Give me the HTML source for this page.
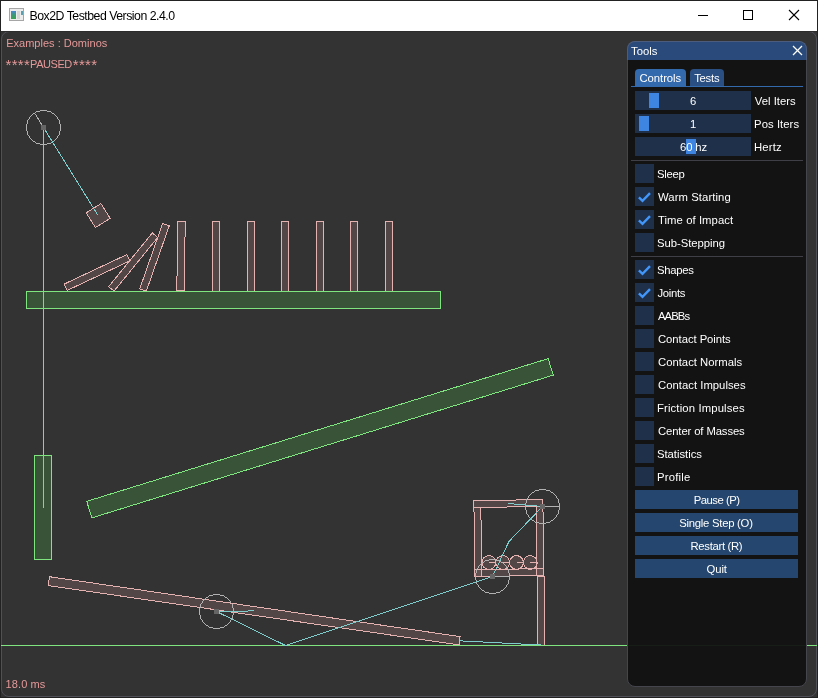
<!DOCTYPE html>
<html><head><meta charset="utf-8"><style>
*{margin:0;padding:0;box-sizing:border-box}
html,body{width:818px;height:698px;overflow:hidden;background:#202020;font-family:"Liberation Sans", sans-serif}
#win{position:absolute;left:0;top:0;width:818px;height:698px;background:#333333;will-change:transform;overflow:hidden}
#frame{position:absolute;left:0;top:0;width:818px;height:698px;border:1px solid #222222;pointer-events:none}
#title{position:absolute;left:1px;top:1px;width:816px;height:30px;background:#ffffff}
#row31{position:absolute;left:1px;top:31px;width:816px;height:1px;background:#2c2c2c}
#overlay{position:absolute;left:1px;top:31px;width:816px;height:666px;border:1px solid #505059;border-radius:8px}
.tx{position:absolute;line-height:13px;white-space:nowrap;font-family:"Liberation Sans", sans-serif}
svg.scene{position:absolute;left:0;top:0}
#tools{position:absolute;left:627px;top:41px;width:180px;height:646px;background:rgba(17,17,17,0.94);border:1px solid #45454e;border-radius:8px;overflow:hidden}
#tbar{position:absolute;left:627px;top:41px;width:180px;height:19px;background:#294a7a;border:1px solid #4b5c7d;border-bottom:none;border-radius:8px 8px 0 0}
.tab{position:absolute;top:69px;height:17px;border-radius:4px 4px 0 0}
.frame{position:absolute;left:635px;width:116px;height:19px;background:#1e304a}
.grab{position:absolute;width:10px;height:15px;background:#3d85e0}
.sep{position:absolute;left:631px;width:172px;height:1px;background:#3f3f48}
.cb{position:absolute;left:635px;width:19px;height:19px;background:#1e304a}
.ck{position:absolute;left:635px}
.btn{position:absolute;left:635px;width:163px;height:19px;background:#25466e}
.ast{font-size:15px;letter-spacing:0.3px;vertical-align:-2px}
</style></head><body>
<div id="win">
<div id="title">
  <svg style="position:absolute;left:8px;top:7px" width="16" height="15"><defs><linearGradient id="ig" x1="0" y1="0" x2="0" y2="1"><stop offset="0" stop-color="#4a86d0"/><stop offset="0.5" stop-color="#3a9a78"/><stop offset="1" stop-color="#3aa050"/></linearGradient></defs><rect x="0.5" y="0.5" width="14" height="12" fill="#ececec" stroke="#a6a6a6"/><rect x="2" y="3" width="5" height="8" fill="url(#ig)"/><rect x="8" y="3" width="3" height="8" fill="#d6d6d6"/><rect x="12" y="3" width="2" height="4" fill="#5aa0b0"/></svg>
  <svg style="position:absolute;left:689px;top:-1px" width="126" height="30">
    <line x1="8" y1="15.5" x2="18" y2="15.5" stroke="#000" stroke-width="1"/>
    <rect x="53.5" y="10.5" width="9" height="9" fill="none" stroke="#000" stroke-width="1"/>
    <line x1="99" y1="10" x2="109" y2="20" stroke="#000" stroke-width="1.1"/>
    <line x1="109" y1="10" x2="99" y2="20" stroke="#000" stroke-width="1.1"/>
  </svg>
</div>
<div class="tx" style="left:29.5px;top:10px;font-size:12.3px;color:#000000;letter-spacing:-0.492px">Box2D Testbed Version 2.4.0</div>
<div id="overlay"></div>
<div id="row31"></div>
<svg class="scene" width="818" height="698" shape-rendering="crispEdges">
<polygon points="537.2,562.5 536.67,559.86 535.18,557.62 532.94,556.13 530.3,555.6 527.66,556.13 525.42,557.62 523.93,559.86 523.4,562.5 523.93,565.14 525.42,567.38 527.66,568.87 530.3,569.4 532.94,568.87 535.18,567.38 536.67,565.14" fill="rgba(115,89,89,0.5)"/>
<polygon points="523.4,562.5 522.87,559.86 521.38,557.62 519.14,556.13 516.5,555.6 513.86,556.13 511.62,557.62 510.13,559.86 509.6,562.5 510.13,565.14 511.62,567.38 513.86,568.87 516.5,569.4 519.14,568.87 521.38,567.38 522.87,565.14" fill="rgba(115,89,89,0.5)"/>
<polygon points="509.6,562.5 509.07,559.86 507.58,557.62 505.34,556.13 502.7,555.6 500.06,556.13 497.82,557.62 496.33,559.86 495.8,562.5 496.33,565.14 497.82,567.38 500.06,568.87 502.7,569.4 505.34,568.87 507.58,567.38 509.07,565.14" fill="rgba(115,89,89,0.5)"/>
<polygon points="495.8,562.5 495.27,559.86 493.78,557.62 491.54,556.13 488.9,555.6 486.26,556.13 484.02,557.62 482.53,559.86 482,562.5 482.53,565.14 484.02,567.38 486.26,568.87 488.9,569.4 491.54,568.87 493.78,567.38 495.27,565.14" fill="rgba(115,89,89,0.5)"/>
<polygon points="537.5,576.5 544.5,576.5 544.5,645.5 537.5,645.5" fill="rgba(115,89,89,0.5)"/>
<polygon points="473.95,507.41 542.95,506.58 542.87,499.68 473.87,500.51" fill="rgba(115,89,89,0.5)"/>
<polygon points="536.95,575.67 543.85,575.58 542.95,506.58 536.05,506.67" fill="rgba(115,89,89,0.5)"/>
<polygon points="474.85,576.47 481.75,576.38 480.85,507.39 473.95,507.48" fill="rgba(115,89,89,0.5)"/>
<polygon points="474.85,576.47 543.85,575.58 543.76,568.68 474.76,569.57" fill="rgba(115,89,89,0.5)"/>
<polygon points="100.97,203.61 110.19,218.37 95.43,227.59 86.21,212.83" fill="rgba(115,89,89,0.5)"/>
<polygon points="49.4,576.7 460,636.6 459,644.9 48.4,585.6" fill="rgba(115,89,89,0.5)"/>
<polygon points="34.5,455.5 51.5,455.5 51.5,559.5 34.5,559.5" fill="rgba(64,115,64,0.5)"/>
<polygon points="91.84,517.86 553.26,375.12 548.16,358.64 86.74,501.38" fill="rgba(64,115,64,0.5)"/>
<polygon points="385.5,221.5 392.5,221.5 392.5,291.5 385.5,291.5" fill="rgba(115,89,89,0.5)"/>
<polygon points="350.5,221.5 357.5,221.5 357.5,291.5 350.5,291.5" fill="rgba(115,89,89,0.5)"/>
<polygon points="316.5,221.5 323.5,221.5 323.5,291.5 316.5,291.5" fill="rgba(115,89,89,0.5)"/>
<polygon points="281.5,221.5 288.5,221.5 288.5,291.5 281.5,291.5" fill="rgba(115,89,89,0.5)"/>
<polygon points="247.5,221.5 254.5,221.5 254.5,291.5 247.5,291.5" fill="rgba(115,89,89,0.5)"/>
<polygon points="212.5,221.5 219.5,221.5 219.5,291.5 212.5,291.5" fill="rgba(115,89,89,0.5)"/>
<polygon points="177.93,221.5 185.27,221.6 184.12,290.5 176.78,290.4" fill="rgba(115,89,89,0.5)"/>
<polygon points="139.76,288.8 162.63,223.49 169.24,225.8 146.37,291.11" fill="rgba(115,89,89,0.5)"/>
<polygon points="108.66,286.64 152.31,232.94 157.74,237.36 114.09,291.06" fill="rgba(115,89,89,0.5)"/>
<polygon points="64.21,284.09 126.8,254.58 129.79,260.91 67.2,290.42" fill="rgba(115,89,89,0.5)"/>
<polygon points="26.5,291.5 440.5,291.5 440.5,308.5 26.5,308.5" fill="rgba(64,115,64,0.5)"/>
<polygon points="537.2,562.5 536.67,559.86 535.18,557.62 532.94,556.13 530.3,555.6 527.66,556.13 525.42,557.62 523.93,559.86 523.4,562.5 523.93,565.14 525.42,567.38 527.66,568.87 530.3,569.4 532.94,568.87 535.18,567.38 536.67,565.14" fill="none" stroke="#e5b2b2"/>
<line x1="530.3" y1="562.5" x2="537.2" y2="562.5" stroke="#e5b2b2"/>
<polygon points="523.4,562.5 522.87,559.86 521.38,557.62 519.14,556.13 516.5,555.6 513.86,556.13 511.62,557.62 510.13,559.86 509.6,562.5 510.13,565.14 511.62,567.38 513.86,568.87 516.5,569.4 519.14,568.87 521.38,567.38 522.87,565.14" fill="none" stroke="#e5b2b2"/>
<line x1="516.5" y1="562.5" x2="523.4" y2="562.5" stroke="#e5b2b2"/>
<polygon points="509.6,562.5 509.07,559.86 507.58,557.62 505.34,556.13 502.7,555.6 500.06,556.13 497.82,557.62 496.33,559.86 495.8,562.5 496.33,565.14 497.82,567.38 500.06,568.87 502.7,569.4 505.34,568.87 507.58,567.38 509.07,565.14" fill="none" stroke="#e5b2b2"/>
<line x1="502.7" y1="562.5" x2="509.6" y2="562.5" stroke="#e5b2b2"/>
<polygon points="495.8,562.5 495.27,559.86 493.78,557.62 491.54,556.13 488.9,555.6 486.26,556.13 484.02,557.62 482.53,559.86 482,562.5 482.53,565.14 484.02,567.38 486.26,568.87 488.9,569.4 491.54,568.87 493.78,567.38 495.27,565.14" fill="none" stroke="#e5b2b2"/>
<line x1="488.9" y1="562.5" x2="495.8" y2="562.5" stroke="#e5b2b2"/>
<polygon points="537.5,576.5 544.5,576.5 544.5,645.5 537.5,645.5" fill="none" stroke="#e5b2b2"/>
<polygon points="473.95,507.41 542.95,506.58 542.87,499.68 473.87,500.51" fill="none" stroke="#e5b2b2"/>
<polygon points="536.95,575.67 543.85,575.58 542.95,506.58 536.05,506.67" fill="none" stroke="#e5b2b2"/>
<polygon points="474.85,576.47 481.75,576.38 480.85,507.39 473.95,507.48" fill="none" stroke="#e5b2b2"/>
<polygon points="474.85,576.47 543.85,575.58 543.76,568.68 474.76,569.57" fill="none" stroke="#e5b2b2"/>
<polygon points="100.97,203.61 110.19,218.37 95.43,227.59 86.21,212.83" fill="none" stroke="#e5b2b2"/>
<polygon points="49.4,576.7 460,636.6 459,644.9 48.4,585.6" fill="none" stroke="#e5b2b2"/>
<polygon points="34.5,455.5 51.5,455.5 51.5,559.5 34.5,559.5" fill="none" stroke="#7fe57f"/>
<polygon points="91.84,517.86 553.26,375.12 548.16,358.64 86.74,501.38" fill="none" stroke="#7fe57f"/>
<polygon points="385.5,221.5 392.5,221.5 392.5,291.5 385.5,291.5" fill="none" stroke="#e5b2b2"/>
<polygon points="350.5,221.5 357.5,221.5 357.5,291.5 350.5,291.5" fill="none" stroke="#e5b2b2"/>
<polygon points="316.5,221.5 323.5,221.5 323.5,291.5 316.5,291.5" fill="none" stroke="#e5b2b2"/>
<polygon points="281.5,221.5 288.5,221.5 288.5,291.5 281.5,291.5" fill="none" stroke="#e5b2b2"/>
<polygon points="247.5,221.5 254.5,221.5 254.5,291.5 247.5,291.5" fill="none" stroke="#e5b2b2"/>
<polygon points="212.5,221.5 219.5,221.5 219.5,291.5 212.5,291.5" fill="none" stroke="#e5b2b2"/>
<polygon points="177.93,221.5 185.27,221.6 184.12,290.5 176.78,290.4" fill="none" stroke="#e5b2b2"/>
<polygon points="139.76,288.8 162.63,223.49 169.24,225.8 146.37,291.11" fill="none" stroke="#e5b2b2"/>
<polygon points="108.66,286.64 152.31,232.94 157.74,237.36 114.09,291.06" fill="none" stroke="#e5b2b2"/>
<polygon points="64.21,284.09 126.8,254.58 129.79,260.91 67.2,290.42" fill="none" stroke="#e5b2b2"/>
<polygon points="26.5,291.5 440.5,291.5 440.5,308.5 26.5,308.5" fill="none" stroke="#7fe57f"/>
<line x1="1" y1="645.5" x2="817" y2="645.5" stroke="#7fe57f"/>
<line x1="459.5" y1="640.8" x2="540.5" y2="645" stroke="#7fcccc"/>
<line x1="542.5" y1="506.5" x2="559.75" y2="506.5" stroke="#b2b2b2"/>
<polygon points="559.75,506.5 558.44,499.9 554.7,494.3 549.1,490.56 542.5,489.25 535.9,490.56 530.3,494.3 526.56,499.9 525.25,506.5 526.56,513.1 530.3,518.7 535.9,522.44 542.5,523.75 549.1,522.44 554.7,518.7 558.44,513.1" fill="none" stroke="#b2b2b2"/>
<line x1="508.9" y1="541.53" x2="542.5" y2="506.5" stroke="#7fcccc"/>
<line x1="542.5" y1="506.5" x2="542.5" y2="506.5" stroke="#7fcccc"/>
<line x1="508.41" y1="503.55" x2="542.5" y2="506.5" stroke="#7fcccc"/>
<line x1="492.5" y1="576.5" x2="509.75" y2="576.5" stroke="#b2b2b2"/>
<polygon points="509.75,576.5 508.44,569.9 504.7,564.3 499.1,560.56 492.5,559.25 485.9,560.56 480.3,564.3 476.56,569.9 475.25,576.5 476.56,583.1 480.3,588.7 485.9,592.44 492.5,593.75 499.1,592.44 504.7,588.7 508.44,583.1" fill="none" stroke="#b2b2b2"/>
<line x1="285.5" y1="645.5" x2="492.5" y2="576.5" stroke="#7fcccc"/>
<line x1="492.5" y1="576.5" x2="492.5" y2="576.5" stroke="#7fcccc"/>
<line x1="508.9" y1="541.53" x2="492.5" y2="576.5" stroke="#7fcccc"/>
<line x1="43.5" y1="127.5" x2="34.46" y2="112.81" stroke="#b2b2b2"/>
<polygon points="60.75,127.5 59.44,120.9 55.7,115.3 50.1,111.56 43.5,110.25 36.9,111.56 31.3,115.3 27.56,120.9 26.25,127.5 27.56,134.1 31.3,139.7 36.9,143.44 43.5,144.75 50.1,143.44 55.7,139.7 59.44,134.1" fill="none" stroke="#b2b2b2"/>
<line x1="43.5" y1="507.5" x2="43.5" y2="127.5" stroke="#7fcccc"/>
<line x1="43.5" y1="127.5" x2="43.5" y2="127.5" stroke="#7fcccc"/>
<line x1="98.2" y1="215.6" x2="43.5" y2="127.5" stroke="#7fcccc"/>
<line x1="216.5" y1="611.5" x2="233.75" y2="611.5" stroke="#b2b2b2"/>
<polygon points="233.75,611.5 232.44,604.9 228.7,599.3 223.1,595.56 216.5,594.25 209.9,595.56 204.3,599.3 200.56,604.9 199.25,611.5 200.56,618.1 204.3,623.7 209.9,627.44 216.5,628.75 223.1,627.44 228.7,623.7 232.44,618.1" fill="none" stroke="#b2b2b2"/>
<line x1="285.5" y1="645.5" x2="216.5" y2="611.5" stroke="#7fcccc"/>
<line x1="216.5" y1="611.5" x2="216.5" y2="611.5" stroke="#7fcccc"/>
<line x1="254.5" y1="610.9" x2="216.5" y2="611.5" stroke="#7fcccc"/>
<rect x="540" y="504" width="5" height="5" fill="#4d4de6"/>
<rect x="540" y="504" width="5" height="5" fill="#666666"/>
<rect x="490" y="574" width="5" height="5" fill="#4d4de6"/>
<rect x="490" y="574" width="5" height="5" fill="#666666"/>
<rect x="41" y="125" width="5" height="5" fill="#4d4de6"/>
<rect x="41" y="125" width="5" height="5" fill="#666666"/>
<rect x="214" y="609" width="5" height="5" fill="#4d4de6"/>
<rect x="214" y="609" width="5" height="5" fill="#666666"/>
</svg>
<div class="tx" style="left:6.2px;top:37px;font-size:11px;color:#e69999;letter-spacing:0.012px">Examples : Dominos</div>
<div class="tx" style="left:5.5px;top:58px;font-size:11px;color:#e69999"><span class="ast">****</span><span style="letter-spacing:-0.45px">PAUSED</span><span class="ast" style="margin-left:1px">****</span></div>
<div class="tx" style="left:5.6px;top:678px;font-size:11px;color:#e69999;letter-spacing:0.1px">18.0 ms</div>
<div id="tools"></div>
  <div id="tbar">
  <svg style="position:absolute;left:164px;top:3px" width="11" height="11"><line x1="1" y1="1" x2="10" y2="10" stroke="#fff" stroke-width="1.2"/><line x1="10" y1="1" x2="1" y2="10" stroke="#fff" stroke-width="1.2"/></svg>
  </div>
<div class="tx" style="left:631px;top:45px;font-size:11.3px;color:#ffffff;letter-spacing:0.0px">Tools</div>
<div class="tab" style="left:635px;width:51px;background:#3369ad"></div>
<div class="tab" style="left:690px;width:34px;background:#2a4f82"></div>
<div class="tx" style="left:639.5px;top:72px;font-size:11.3px;color:#ffffff;letter-spacing:-0.057px">Controls</div><div class="tx" style="left:694.2px;top:72px;font-size:11.3px;color:#ffffff;letter-spacing:-0.25px">Tests</div>
<div style="position:absolute;left:631px;top:86px;width:172px;height:1px;background:#3369ad"></div>
<div class="frame" style="top:91px"></div><div class="grab" style="left:649px;top:93px"></div><div class="tx" style="left:690px;top:95px;font-size:11.3px;color:#ffffff;letter-spacing:0.0px">6</div><div class="tx" style="left:754.8px;top:95px;font-size:11.3px;color:#ffffff;letter-spacing:0.013px">Vel Iters</div>
<div class="frame" style="top:114px"></div><div class="grab" style="left:639px;top:116px"></div><div class="tx" style="left:690px;top:118px;font-size:11.3px;color:#ffffff;letter-spacing:0.0px">1</div><div class="tx" style="left:754.1px;top:118px;font-size:11.3px;color:#ffffff;letter-spacing:0.05px">Pos Iters</div>
<div class="frame" style="top:137px"></div><div class="grab" style="left:686px;top:139px"></div><div class="tx" style="left:680px;top:141px;font-size:11.3px;color:#ffffff;letter-spacing:-0.15px">60 hz</div><div class="tx" style="left:754px;top:141px;font-size:11.3px;color:#ffffff;letter-spacing:0.175px">Hertz</div>
<div class="sep" style="top:160px"></div>
<div class="sep" style="top:256px"></div>
<div class="cb" style="top:164px"></div>
<div class="tx" style="left:657px;top:168px;font-size:11.3px;color:#ffffff;letter-spacing:-0.3px">Sleep</div>
<div class="cb" style="top:187px"></div>
<svg class="ck" style="top:187px" width="19" height="19"><polyline points="3.9,10.3 7.5,13.8 15,6.1" fill="none" stroke="#4296fa" stroke-width="2.4"/></svg>
<div class="tx" style="left:658px;top:191px;font-size:11.3px;color:#ffffff;letter-spacing:0.083px">Warm Starting</div>
<div class="cb" style="top:210px"></div>
<svg class="ck" style="top:210px" width="19" height="19"><polyline points="3.9,10.3 7.5,13.8 15,6.1" fill="none" stroke="#4296fa" stroke-width="2.4"/></svg>
<div class="tx" style="left:658px;top:214px;font-size:11.3px;color:#ffffff;letter-spacing:0.062px">Time of Impact</div>
<div class="cb" style="top:233px"></div>
<div class="tx" style="left:657px;top:237px;font-size:11.3px;color:#ffffff;letter-spacing:-0.045px">Sub-Stepping</div>
<div class="cb" style="top:260px"></div>
<svg class="ck" style="top:260px" width="19" height="19"><polyline points="3.9,10.3 7.5,13.8 15,6.1" fill="none" stroke="#4296fa" stroke-width="2.4"/></svg>
<div class="tx" style="left:657px;top:264px;font-size:11.3px;color:#ffffff;letter-spacing:-0.28px">Shapes</div>
<div class="cb" style="top:283px"></div>
<svg class="ck" style="top:283px" width="19" height="19"><polyline points="3.9,10.3 7.5,13.8 15,6.1" fill="none" stroke="#4296fa" stroke-width="2.4"/></svg>
<div class="tx" style="left:657.5px;top:287px;font-size:11.3px;color:#ffffff;letter-spacing:-0.3px">Joints</div>
<div class="cb" style="top:306px"></div>
<div class="tx" style="left:658px;top:310px;font-size:11.3px;color:#ffffff;letter-spacing:-0.925px">AABBs</div>
<div class="cb" style="top:329px"></div>
<div class="tx" style="left:658px;top:333px;font-size:11.3px;color:#ffffff;letter-spacing:-0.054px">Contact Points</div>
<div class="cb" style="top:352px"></div>
<div class="tx" style="left:658px;top:356px;font-size:11.3px;color:#ffffff;letter-spacing:0.0px">Contact Normals</div>
<div class="cb" style="top:375px"></div>
<div class="tx" style="left:658px;top:379px;font-size:11.3px;color:#ffffff;letter-spacing:0.02px">Contact Impulses</div>
<div class="cb" style="top:398px"></div>
<div class="tx" style="left:657px;top:402px;font-size:11.3px;color:#ffffff;letter-spacing:0.138px">Friction Impulses</div>
<div class="cb" style="top:421px"></div>
<div class="tx" style="left:658px;top:425px;font-size:11.3px;color:#ffffff;letter-spacing:-0.12px">Center of Masses</div>
<div class="cb" style="top:444px"></div>
<div class="tx" style="left:657px;top:448px;font-size:11.3px;color:#ffffff;letter-spacing:-0.033px">Statistics</div>
<div class="cb" style="top:467px"></div>
<div class="tx" style="left:657px;top:471px;font-size:11.3px;color:#ffffff;letter-spacing:0.217px">Profile</div>
<div class="btn" style="top:490px"></div><div class="tx" style="left:693.7px;top:494px;font-size:11.3px;color:#ffffff;letter-spacing:-0.475px">Pause (P)</div>
<div class="btn" style="top:513px"></div><div class="tx" style="left:679.2px;top:517px;font-size:11.3px;color:#ffffff;letter-spacing:-0.25px">Single Step (O)</div>
<div class="btn" style="top:536px"></div><div class="tx" style="left:690.5px;top:540px;font-size:11.3px;color:#ffffff;letter-spacing:-0.31px">Restart (R)</div>
<div class="btn" style="top:559px"></div><div class="tx" style="left:706.6px;top:563px;font-size:11.3px;color:#ffffff;letter-spacing:-0.133px">Quit</div>
<div id="frame"></div>
</div>
</body></html>
